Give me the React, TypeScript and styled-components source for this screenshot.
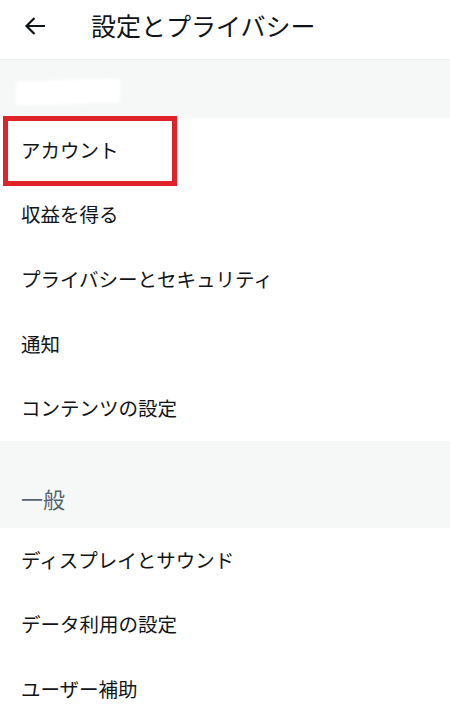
import React from 'react';
import styled, { createGlobalStyle } from 'styled-components';

const GlobalStyle = createGlobalStyle`
  html, body {
    margin: 0;
    padding: 0;
    background: #ffffff;
  }
  body {
    font-family: "Noto Sans CJK JP", "Noto Sans", sans-serif;
    color: #0f1419;
  }
`;

const Page = styled.div`
  width: 450px;
  height: 720px;
  overflow: hidden;
  background: #ffffff;
`;

const Header = styled.header`
  height: 59px;
  display: flex;
  align-items: center;
  border-bottom: 1px solid #eceff0;
`;

const BackButton = styled.div`
  width: 91px;
  padding-left: 24px;
  box-sizing: border-box;
  display: flex;
  align-items: center;
  margin-top: -8px;
`;

const Title = styled.h1`
  margin: 0;
  font-size: 25px;
  font-weight: 400;
  letter-spacing: 0;
  margin-top: -10px;
`;

const Section = styled.div<{ $h: number }>`
  height: ${(p) => p.$h}px;
  background: #f6f8f8;
  box-sizing: border-box;
  display: flex;
  align-items: flex-end;
  padding: 0 21px;
`;

const SectionTitle = styled.div`
  font-size: 22px;
  color: #566470;
  padding-bottom: 14px;
`;

const Redacted = styled.div`
  width: 104px;
  height: 24px;
  margin-bottom: 14px;
  margin-left: -5px;
  background: #ffffff;
  border-radius: 3px;
  filter: blur(1px);
  transform: skewY(-1.5deg);
`;

const List = styled.div`
  display: flex;
  flex-direction: column;
`;

const Row = styled.div`
  position: relative;
  height: 64.6px;
  display: flex;
  align-items: center;
  padding-left: 21px;
  padding-bottom: 2px;
  box-sizing: border-box;
  font-size: 19.5px;
  color: #111418;
`;

const Highlight = styled.div`
  position: absolute;
  left: 3px;
  top: -2px;
  width: 174px;
  height: 70px;
  border: 5px solid #e0222b;
  box-sizing: border-box;
`;

const accountItems = ['アカウント', '収益を得る', 'プライバシーとセキュリティ', '通知', 'コンテンツの設定'];
const generalItems = ['ディスプレイとサウンド', 'データ利用の設定', 'ユーザー補助'];

export default function App() {
  return (
    <Page>
      <GlobalStyle />
      <Header>
        <BackButton>
          <svg width="22" height="20" viewBox="0 0 22 20" fill="none">
            <path d="M21 10H2.5M10.5 2L2.5 10l8 8" stroke="#0f1419" strokeWidth="2.2" />
          </svg>
        </BackButton>
        <Title>設定とプライバシー</Title>
      </Header>
      <Section $h={58}>
        <Redacted />
      </Section>
      <List>
        {accountItems.map((item, i) => (
          <Row key={item}>
            {item}
            {i === 0 && <Highlight />}
          </Row>
        ))}
      </List>
      <Section $h={87}>
        <SectionTitle>一般</SectionTitle>
      </Section>
      <List>
        {generalItems.map((item) => (
          <Row key={item}>{item}</Row>
        ))}
      </List>
    </Page>
  );
}
